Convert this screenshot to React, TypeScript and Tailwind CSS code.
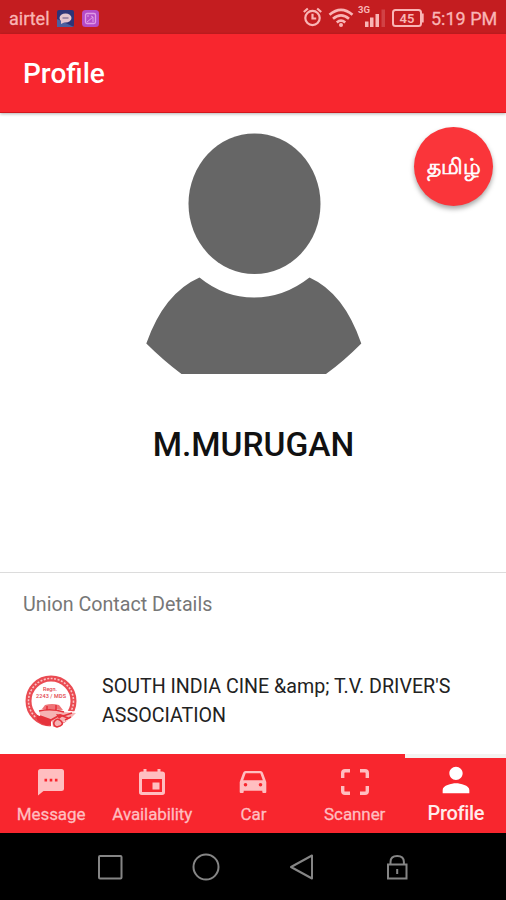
import React from "react";
import { clsx } from "clsx";
import { MdPerson } from "react-icons/md";

const MessageIcon = () => (
    <svg width="28" height="28" viewBox="0 0 28 28" fill="currentColor">
        <path d="M3.500 1h21Q27 1 27 3.500v17.500Q27 23 24.500 23H6.500L1 27.500V3.500Q1 1 3.500 1z" />
        <path d="M7.500 10.800h2.600v2.600H7.500zM12.700 10.800h2.600v2.600h-2.600zM17.900 10.800h2.600v2.600h-2.600z" fill="#f8262e" />
    </svg>
);

const EventIcon = () => (
    <svg width="28" height="28" viewBox="0 0 28 28" fill="currentColor">
        <path
            fillRule="evenodd"
            d="M5.500 1h3v2.500h11V1h3v2.500h1.700Q27 3.500 27 6.300v18Q27 27 24.200 27H3.800Q1 27 1 24.300v-18Q1 3.500 3.800 3.500h1.700zM4 11v13h20V11z"
        />
        <path d="M14.500 14.500h7v7h-7z" />
    </svg>
);

const CarIcon = () => (
    <svg width="28" height="24" viewBox="0 0 28 24" fill="currentColor">
        <path
            fillRule="evenodd"
            d="M6.500 1h15q1.800 0 2.400 1.800L27.300 12v10q0 1-1 1h-2q-1 0-1-1v-1.300H4.700V22q0 1-1 1h-2q-1 0-1-1V12L4.100 2.800Q4.700 1 6.500 1zM6.700 3.300L4.200 10.200h19.600l-2.500-6.900z"
        />
        <circle cx="6.500" cy="14.800" r="1.800" fill="#f8262e" />
        <circle cx="21.500" cy="14.800" r="1.800" fill="#f8262e" />
    </svg>
);

const ScannerIcon = () => (
    <svg width="28" height="26" viewBox="0 0 28 26" fill="none">
        <path
            d="M1.7 9V4q0-2.3 2.3-2.3h5M19 1.7h5q2.3 0 2.3 2.3v5M26.3 17v5q0 2.3-2.3 2.3h-5M9 24.3H4Q1.7 24.3 1.7 22v-5"
            stroke="currentColor"
            strokeWidth="3.4"
        />
    </svg>
);

const tabs = [
    { label: "Message", icon: <MessageIcon /> },
    { label: "Availability", icon: <EventIcon /> },
    { label: "Car", icon: <CarIcon /> },
    { label: "Scanner", icon: <ScannerIcon /> },
    { label: "Profile", icon: <MdPerson size={40} />, active: true },
];

const StatusBar = () => {
    return (
        <div className="flex h-[34px] items-center justify-between bg-[#c41d20] pt-[2px] pr-2 pl-[9px] text-[18px] text-[#f9b5b5]">
            {/* Left */}
            <div className="flex items-center">
                <span className="w-[41px] [-webkit-text-stroke:0.3px]">airtel</span>
                <svg className="ml-[7px]" width="17" height="17" viewBox="0 0 17 17">
                    <rect width="17" height="17" rx="2" fill="#2d3478" />
                    <path d="M0 17V9l17 8z" fill="#4a609f" />
                    <ellipse cx="8.5" cy="8" rx="6" ry="4.5" fill="#e3c5cf" />
                    <path d="M4 10v4l4-2z" fill="#e3c5cf" />
                    <path d="M5.5 8h6" stroke="#806b91" strokeWidth="1.3" />
                </svg>
                <svg className="ml-2" width="17" height="17" viewBox="0 0 17 17">
                    <rect width="17" height="17" rx="3.5" fill="#b54bc8" />
                    <rect x="3.5" y="3.5" width="10" height="10" rx="1.5" fill="none" stroke="#e19be6" strokeWidth="1.3" />
                    <path d="M5 12l6-5v5M5 6h2M9 6l2 1" stroke="#e19be6" fill="none" />
                </svg>
            </div>

            {/* Right */}
            <div className="flex items-center">
                <svg className="mt-[-2px]" width="21" height="20" viewBox="0 0 21 20" fill="none" stroke="currentColor" strokeWidth="2.2">
                    <circle cx="10.5" cy="11" r="7.2" />
                    <path d="M1.800 5l4-3.500M19.200 5l-4-3.500M10.500 6.800v4.700h3.700" />
                </svg>
                <svg className="mt-[-2px] ml-[5px]" width="26" height="19" viewBox="0 0 26 19" fill="none">
                    <path
                        d="M1.5 6.8Q13-3 24.5 6.8M5 10.8q8-6.8 16 0M8.8 14.5q4.2-3.6 8.4 0"
                        stroke="currentColor"
                        strokeWidth="2.7"
                    />
                    <circle cx="13" cy="16.9" r="2" fill="currentColor" />
                </svg>
                <svg className="mt-[-5px] ml-[3px]" width="30" height="24" viewBox="0 0 30 24" fill="currentColor">
                    <text x="1" y="8.5" fontSize="9.5" fontWeight="700" textLength="12" lengthAdjust="spacingAndGlyphs">3G</text>
                    <path d="M8 17.5h3.5V23H8zM13 13.5h3.5V23H13zM18.5 10H22v13h-3.5z" />
                    <path d="M24.5 5.500H28V23h-3.500z" opacity=".25" />
                </svg>
                <svg className="ml-[5px]" width="32" height="18" viewBox="0 0 32 18">
                    <rect x="1" y="1" width="28" height="16" rx="2.5" fill="none" stroke="currentColor" strokeWidth="2" />
                    <path d="M30.5 4.500v9" stroke="currentColor" strokeWidth="2.4" />
                    <text x="15" y="13.5" fontSize="13" fontWeight="600" textAnchor="middle" fill="currentColor">45</text>
                </svg>
                <span className="ml-[7px] w-[67px] whitespace-nowrap [-webkit-text-stroke:0.3px]">5:19 PM</span>
            </div>
        </div>
    );
};

const UnionLogo = () => (
    <svg width="54" height="54" viewBox="0 0 54 54" fill="none">
        <circle cx="26" cy="26" r="22.5" stroke="#ea4b52" strokeWidth="6" />
        <circle cx="26" cy="26" r="22.5" stroke="#fbc3c5" strokeWidth="1.6" strokeDasharray="2 1.5" />
        <g fill="#e2434b" fontSize="5.5" fontWeight="500" textAnchor="middle">
            <text x="25" y="16">Regn.</text>
            <text x="26" y="23" textLength="30">2243 / MDS</text>
        </g>
        <path d="M15 36l4-5.5q7-2 16 0l4 5 12 1-2 6-11 5-5 6-6-1-11-7-3-4z" fill="#fff" />
        <path d="M17 34l3-4q7-2 14 0l4 5z" fill="#ef7478" />
        <path d="M14 36q12-3 25 1l12 1-4 4-9 5-5 5h-5l-1-5-11-4z" fill="#f6b3b4" />
        <path
            d="M14 36q12-3 25 1M15 41l11 4 9-5 8 3M29 47q3-5 7-1t-4 6q-4-1-3-5M38 41l9-3M22 31v4M31 30v5M40 45l6-3"
            stroke="#e5333c"
            strokeWidth="1.6"
        />
        <path d="M12 40l14 5v6q-9 0-15-7zM31 39l8 1-5 4z" fill="#e5333c" />
    </svg>
);

const TabBar = () => {
    return (
        <div className="flex h-[79px] bg-[#f8262e] text-[#ffbec0]">
            {tabs.map((tab) => (
                <button
                    key={tab.label}
                    className={clsx(
                        "flex w-1/5 flex-col items-center border-t-4 pl-px",
                        tab.active
                            ? "border-[#f3f3f1] text-white"
                            : "border-transparent"
                    )}
                >
                    <span
                        className={clsx(
                            "flex items-center justify-center",
                            tab.active ? "h-[43px]" : "h-[48px]"
                        )}
                    >
                        {tab.icon}
                    </span>
                    <span
                        className={clsx(
                            "whitespace-nowrap",
                            tab.active
                                ? "text-[20px] leading-[24px] font-medium tracking-[-0.3px] text-[#ffebeb]"
                                : "-mt-[3px] text-[17px] leading-[22px] tracking-[-0.1px] [-webkit-text-stroke:0.3px]"
                        )}
                    >
                        {tab.label}
                    </span>
                </button>
            ))}
        </div>
    );
};

const SystemNav = () => {
    return (
        <div className="h-[67px] bg-black">
            <div className="flex h-[67px] items-center justify-center text-[#858585]">
                <svg width="312" height="28" viewBox="0 0 312 28" fill="none" stroke="currentColor" strokeWidth="2">
                    <rect x="2" y="3" width="22.5" height="22.5" rx="1" />
                    <circle cx="109" cy="14" r="12.5" />
                    <path d="M215 2.5v23L194 14z" strokeLinejoin="round" />
                    <path d="M291 11.5h18.5v14H291zM293.500 11V9q0-6 6.700-6t6.700 6v2M300.200 16v5" />
                </svg>
            </div>
        </div>
    );
};

const App = () => {
    return (
        <div className="flex h-[900px] w-[506px] flex-col overflow-hidden bg-white font-[Roboto,sans-serif]">
            <StatusBar />
            <header className="z-10 flex h-[79px] items-center border-b border-[#d3161c] bg-[#f8262e] pt-[2px] pl-[23px] shadow-[0_1px_3px_rgba(0,0,0,0.3)]">
                <h1 className="text-[28px] font-medium text-white">Profile</h1>
            </header>

            <main className="flex flex-1 flex-col">
                <section className="relative flex h-[460px] flex-col items-center border-b border-[#dcdcdc] pt-5">
                    <svg className="mr-[-1px]" width="216" height="241" viewBox="146 133 216 241" fill="#666">
                        <ellipse cx="254.5" cy="203.8" rx="66" ry="70.3" />
                        <path d="M199.500 277.500Q224 297.500 254 297.500T309.500 277.500Q344 293 361.300 343.500Q344 361 326 374H181.500Q164 361 146.300 343.500Q164 293 199.500 277.500Z" />
                    </svg>
                    <h2 className="mt-[50px] ml-px text-[33.5px] leading-[42px] font-medium whitespace-nowrap text-[#111]">
                        M.MURUGAN
                    </h2>
                    <button className="absolute top-[14px] right-[13px] h-[79px] w-[79px] rounded-full bg-[#fa353a] text-[22px] text-white shadow-[0_3px_5px_rgba(0,0,0,0.35)] [-webkit-text-stroke:0.7px]">
                        தமிழ்
                    </button>
                </section>

                <section className="flex-1 pl-[23px]">
                    <h3 className="pt-5 text-[19.7px] leading-6 text-[#777]">
                        Union Contact Details
                    </h3>
                    <div className="mt-[54px] flex">
                        <div className="mt-[4px] w-[79px] pl-[2px]">
                            <UnionLogo />
                        </div>
                        <p className="mt-px text-[19.65px] leading-[29px] whitespace-nowrap text-[#222]">
                            SOUTH INDIA CINE &amp;amp; T.V. DRIVER'S
                            <br />
                            ASSOCIATION
                        </p>
                    </div>
                </section>
            </main>

            <TabBar />
            <SystemNav />
        </div>
    );
};

export default App;
